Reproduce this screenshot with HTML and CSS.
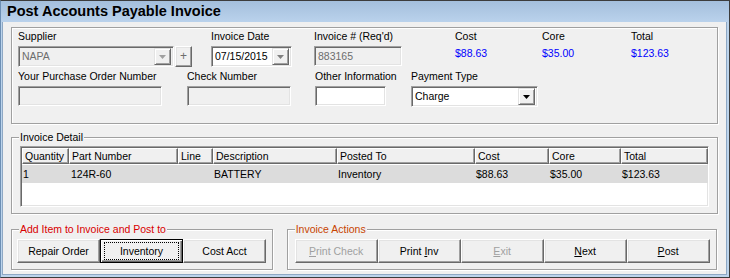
FILE: index.html
```html
<!DOCTYPE html>
<html>
<head>
<meta charset="utf-8">
<link rel="stylesheet" href="styles.css">
</head>
<body>
<div class="window">
  <div class="titlebar">Post Accounts Payable Invoice</div>
  <div class="client">
    <div class="group g-top">
      <div class="row r1">
        <div class="col w-sup">
          <div class="lbl">Supplier</div>
          <div class="ctrls">
            <div class="field combo disabled sup-combo"><span class="val">NAPA</span><span class="ddbtn"><svg width="7" height="4" viewBox="0 0 7 4"><polygon points="0,0 7,0 3.5,4" fill="#a0a0a0"/></svg></span></div>
            <div class="btn plus">+</div>
          </div>
        </div>
        <div class="col w-date">
          <div class="lbl">Invoice Date</div>
          <div class="field combo date"><span class="val">07/15/2015</span><span class="ddbtn"><svg width="7" height="4" viewBox="0 0 7 4"><polygon points="0,0 7,0 3.5,4" fill="#808080"/></svg></span></div>
        </div>
        <div class="col w-inv">
          <div class="lbl">Invoice # (Req'd)</div>
          <div class="field text disabled inv"><span class="val">883165</span></div>
        </div>
        <div class="col w-cost">
          <div class="lbl">Cost</div>
          <div class="amt">$88.63</div>
        </div>
        <div class="col w-core">
          <div class="lbl">Core</div>
          <div class="amt">$35.00</div>
        </div>
        <div class="col">
          <div class="lbl">Total</div>
          <div class="amt">$123.63</div>
        </div>
      </div>
      <div class="row r2">
        <div class="col w-po">
          <div class="lbl">Your Purchase Order Number</div>
          <div class="field text disabled po"></div>
        </div>
        <div class="col w-chk">
          <div class="lbl">Check Number</div>
          <div class="field text disabled chk"></div>
        </div>
        <div class="col w-oth">
          <div class="lbl">Other Information</div>
          <div class="field text oth"></div>
        </div>
        <div class="col">
          <div class="lbl">Payment Type</div>
          <div class="field combo pay"><span class="val">Charge</span><span class="ddbtn"><svg width="7" height="4" viewBox="0 0 7 4"><polygon points="0,0 7,0 3.5,4" fill="#000"/></svg></span></div>
        </div>
      </div>
    </div>

    <div class="group g-detail">
      <span class="gtitle">Invoice Detail</span>
      <div class="grid">
        <div class="grow ghead">
          <div class="cell c1">Quantity</div>
          <div class="cell c2">Part Number</div>
          <div class="cell c3">Line</div>
          <div class="cell c4">Description</div>
          <div class="cell c5">Posted To</div>
          <div class="cell c6">Cost</div>
          <div class="cell c7">Core</div>
          <div class="cell c8">Total</div>
        </div>
        <div class="grow gdata">
          <div class="cell c1">1</div>
          <div class="cell c2 pn">124R-60</div>
          <div class="cell c3"></div>
          <div class="cell c4">BATTERY</div>
          <div class="cell c5">Inventory</div>
          <div class="cell c6">$88.63</div>
          <div class="cell c7">$35.00</div>
          <div class="cell c8">$123.63</div>
        </div>
      </div>
    </div>

    <div class="bottom">
      <div class="group g-add">
        <span class="gtitle red">Add Item to Invoice and Post to</span>
        <div class="btnrow">
          <div class="btn big"><span>Repair Order</span></div>
          <div class="btn big default"><span class="focus">Inventory</span></div>
          <div class="btn big"><span>Cost Acct</span></div>
        </div>
      </div>
      <div class="group g-act">
        <span class="gtitle orange">Invoice Actions</span>
        <div class="btnrow">
          <div class="btn big dis"><span><u>P</u>rint Check</span></div>
          <div class="btn big"><span>Print <u>I</u>nv</span></div>
          <div class="btn big dis"><span><u>E</u>xit</span></div>
          <div class="btn big"><span><u>N</u>ext</span></div>
          <div class="btn big"><span><u>P</u>ost</span></div>
        </div>
      </div>
    </div>
  </div>
</div>
</body>
</html>
```

FILE: styles.css
```css
* { box-sizing: border-box; }
html, body { margin: 0; padding: 0; }
body {
  width: 730px;
  height: 278px;
  overflow: hidden;
  font-family: "Liberation Sans", Arial, sans-serif;
  font-size: 10.5px;
  color: #000;
  background: #f0f0f0;
}
.window {
  width: 730px;
  height: 278px;
  display: flex;
  flex-direction: column;
  border-top: 1px solid #3c3c3c;
  border-left: 1px solid #6d8fb4;
  border-right: 1px solid #3c3c3c;
  border-bottom: 1px solid #3c3c3c;
  background: #bcd4ec;
}
.titlebar {
  height: 21px;
  line-height: 21px;
  padding-left: 6px;
  font-size: 14.5px;
  font-weight: bold;
  background: linear-gradient(to bottom, #a4bfdc, #bad2ec);
  flex: none;
}
.client {
  flex: 1;
  margin: 0 2px 2px 1px;
  background: #f0f0f0;
  border-left: 1px solid #8ea8c4;
  border-right: 1px solid #8ea8c4;
  border-bottom: 1px solid #8ea8c4;
  padding: 5px 9px 0 8px;
}
.group {
  position: relative;
  border: 1px solid #a0a0a0;
  box-shadow: inset 1px 1px 0 #fff, 1px 1px 0 #fff;
}
.gtitle {
  position: absolute;
  top: -7px;
  left: 7px;
  padding: 0 1px 0 1px;
  background: #f0f0f0;
  line-height: 13px;
}
.gtitle.red { color: #d80000; }
.gtitle.orange { color: #c84400; }

.g-top {
  width: 707px;
  height: 97px;
  padding: 2px 0 0 6px;
}
.row { display: flex; }
.r2 { margin-top: 3px; }
.col { display: flex; flex-direction: column; }
.lbl { line-height: 13px; height: 13px; margin-bottom: 3px; white-space: nowrap; }
.w-sup { width: 193px; }
.w-date { width: 103px; }
.w-inv { width: 141px; }
.w-cost { width: 87px; }
.w-core { width: 89px; }
.w-po { width: 169px; }
.w-chk { width: 128px; }
.w-oth { width: 96px; }
.ctrls { display: flex; gap: 1px; }

.field {
  height: 20px;
  background: #fff;
  border: 1px solid;
  border-color: #a0a0a0 #fff #fff #a0a0a0;
  box-shadow: inset 1px 1px 0 #696969, inset -1px -1px 0 #e3e3e3;
  display: flex;
  align-items: center;
  padding: 0 2px 0 3px;
  line-height: 13px;
  white-space: nowrap;
}
.field.combo { height: 21px; justify-content: space-between; padding-right: 2px; }
.field.disabled { background: #f0f0f0; color: #6d6d6d; }
.val { flex: 1; }
.ddbtn {
  width: 17px;
  height: 17px;
  background: #f0f0f0;
  border: 1px solid;
  border-color: #e3e3e3 #696969 #696969 #e3e3e3;
  box-shadow: inset 1px 1px 0 #fff, inset -1px -1px 0 #a0a0a0;
  display: flex;
  align-items: center;
  justify-content: center;
  flex: none;
}
.sup-combo { width: 156px; }
.date { width: 81px; }
.inv { width: 88px; }
.po { width: 144px; }
.chk { width: 104px; }
.oth { width: 71px; }
.pay { width: 127px; }

.amt { color: #0000ff; line-height: 13px; padding-top: 1px; }

.btn {
  background: #f0f0f0;
  border: 1px solid;
  border-color: #fff #696969 #696969 #fff;
  box-shadow: inset -1px -1px 0 #a0a0a0, inset 1px 1px 0 #e3e3e3;
  display: flex;
  align-items: center;
  justify-content: center;
  white-space: nowrap;
  line-height: 13px;
}
.btn > span { white-space: pre; }
.btn.plus { width: 17px; height: 21px; color: #6d6d6d; font-size: 12px; }

.g-detail {
  width: 707px;
  height: 77px;
  margin-top: 13px;
  padding: 8px 0 0 8px;
}
.grid {
  width: 689px;
  height: 61px;
  background: #fff;
  border: 1px solid;
  border-color: #a0a0a0 #fff #fff #a0a0a0;
  box-shadow: inset 1px 1px 0 #696969, inset -1px -1px 0 #e3e3e3;
  padding: 1px 0 0 1px;
  overflow: hidden;
}
.grow { display: flex; }
.ghead .cell {
  height: 16px;
  line-height: 14px;
  background: #f0f0f0;
  border: 1px solid;
  border-color: #fff #696969 #696969 #fff;
  box-shadow: inset -1px -1px 0 #a0a0a0;
  padding-left: 2px;
}
.gdata { background: #dcdcdc; margin-top: 1px; height: 18px; align-items: center; }
.gdata .cell { line-height: 13px; padding-left: 1px; }
.gdata .pn { padding-left: 2px; }
.cell { flex: none; white-space: nowrap; overflow: hidden; }
.c1 { width: 47px; }
.c2 { width: 109px; }
.c3 { width: 35px; }
.c4 { width: 124px; }
.c5 { width: 138px; }
.c6 { width: 74px; }
.c7 { width: 72px; }
.c8 { width: 87px; }

.bottom { display: flex; margin-top: 15px; gap: 14px; }
.g-add { width: 262px; height: 41px; padding: 9px 0 0 5px; }
.g-act { width: 431px; height: 41px; padding: 9px 0 0 7px; }
.btnrow { display: flex; }
.btn.big { width: 83px; height: 24px; }
.btn.dis { color: #a0a0a0; }
.btn.default {
  border: 1px solid #000;
  box-shadow: inset 1px 1px 0 #fff, inset -1px -1px 0 #696969, inset -2px -2px 0 #a0a0a0;
  padding: 2px 3px 2px 3px;
  align-items: stretch;
}
.btn .focus {
  flex: 1;
  border: 1px dotted #000;
  display: flex;
  align-items: center;
  justify-content: center;
  line-height: 13px;
}
u { text-decoration: underline; text-underline-offset: 1px; }
```
